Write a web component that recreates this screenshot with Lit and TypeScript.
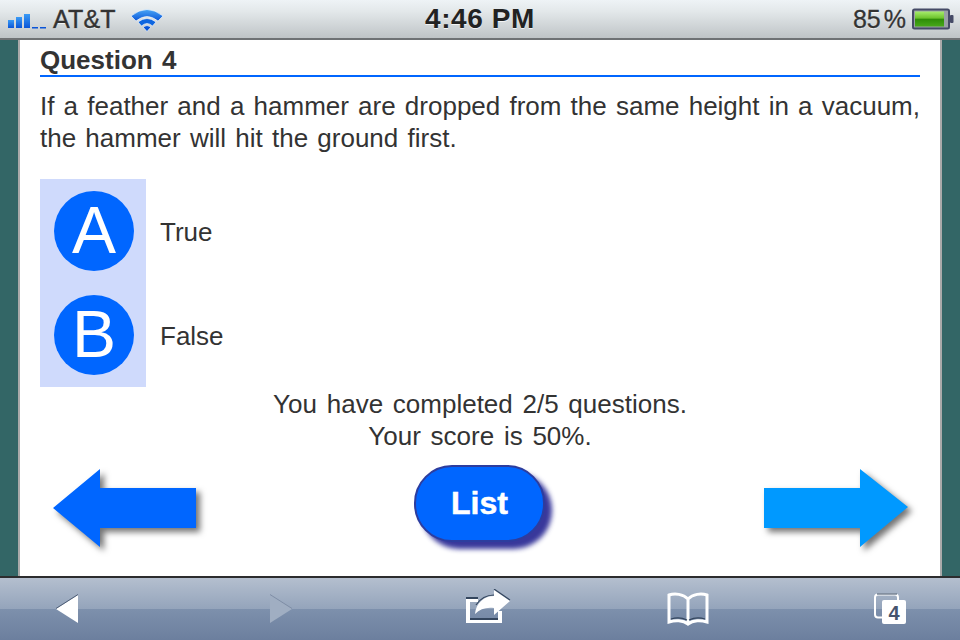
import { LitElement, html, css } from "lit";
import { customElement } from "lit/decorators.js";

@customElement("app-root")
export class AppRoot extends LitElement {
  static styles = css`
    :host { display: block; width: 960px; height: 640px; overflow: hidden; font-family: "Liberation Sans", Arial, sans-serif; color: #333; }
    .screen { display: flex; flex-direction: column; width: 960px; height: 640px; }
    .status { position: relative; flex: none; height: 40px; box-sizing: border-box; border-bottom: 2px solid #6f7275; background: linear-gradient(#eef3f6, #e3e8ea 30%, #bfc4c7); display: flex; align-items: center; justify-content: space-between; padding: 0 6px; color: #333; text-shadow: 0 1px 0 rgba(255,255,255,.75); }
    .left, .right { display: flex; align-items: center; }
    .carrier { font-size: 25px; margin-left: 6px; line-height: 38px; letter-spacing: .2px; -webkit-text-stroke: .4px #333; }
    .wifi { margin-left: 14px; display: block; }
    .bars { display: block; margin-left: 1px; }
    .time { position: absolute; left: 0; right: 0; top: 0; text-align: center; font-size: 28px; font-weight: bold; line-height: 38px; color: #222; letter-spacing: .6px; }
    .pct { font-size: 25px; margin-right: 6px; line-height: 38px; -webkit-text-stroke: .3px #333; }
    .pct span { margin-left: 3px; }
    .main { flex: 1; background: #336666; padding: 0 18px; display: flex; min-height: 0; }
    .page { flex: 1; background: #fff; border-left: 2px solid #aaa; border-right: 2px solid #aaa; padding: 0 20px; display: flex; flex-direction: column; }
    h2 { margin: 0; padding-top: 5px; box-sizing: border-box; font-size: 26px; line-height: 31px; font-weight: bold; word-spacing: 2px; border-bottom: 2px solid #0066ff; height: 37px; color: #333; }
    .q { margin: 13px 0 0; font-size: 26px; line-height: 32px; }
    .q span { display: block; }
    .l1 { text-align: justify; text-align-last: justify; white-space: nowrap; }
    .l2 { word-spacing: 2px; }
    .choices { display: grid; grid-template-columns: 106px auto; margin-top: 25px; justify-content: start; }
    .cell { background: #cfdafc; height: 104px; display: flex; align-items: center; justify-content: center; padding-left: 2px; box-sizing: border-box; }
    .circle { width: 80px; height: 80px; border-radius: 50%; background: #0066ff; color: #fff; font-size: 66px; line-height: 78px; text-align: center; }
    .label { font-size: 26px; display: flex; align-items: center; padding: 2px 0 0 14px; }
    .done { text-align: center; font-size: 26px; line-height: 32px; margin-top: 1px; word-spacing: 2.5px; }
    .nav { display: flex; align-items: flex-start; justify-content: space-between; margin-top: 13px; padding: 0 12px 0 13px; }
    .arrow { display: block; margin-top: 4px; filter: drop-shadow(4px 4px 3px rgba(0,0,0,.55)); }
    .list { width: 131px; height: 77px; margin-right: 2px; box-sizing: border-box; border: 2px solid #2d3d9e; border-radius: 38px; background: #0066ff; color: #fff; font-size: 32px; font-weight: bold; -webkit-text-stroke: .5px #fff; display: flex; align-items: center; justify-content: center; box-shadow: 7px 7px 5px rgba(45,45,150,.95); }
    .tools { flex: none; height: 64px; box-sizing: border-box; border-top: 2px solid #2c2c2e; background: linear-gradient(#b3bece 1px, #94a4bb 50%, #7d90ac 50%, #6c7f9e); display: grid; grid-template-columns: 134px 294px 120px 280px 124px; align-items: center; }
    .tool { display: flex; justify-content: center; }
    .tool svg { display: block; }
    .count { font: bold 20px "Liberation Sans", sans-serif; fill: #46546d; text-anchor: middle; }
  `;

  render() {
    return html`<div class="screen">
      <div class="status">
        <div class="left">
          <svg class="bars" width="40" height="20" viewBox="0 0 40 20">
            <defs><linearGradient id="b" x1="0" y1="0" x2="0" y2="1"><stop offset="0" stop-color="#3a9bf5"/><stop offset="1" stop-color="#0a55d8"/></linearGradient></defs>
            <rect x="1" y="11" width="6" height="8" fill="url(#b)"/>
            <rect x="9" y="8" width="6" height="11" fill="url(#b)"/>
            <rect x="17" y="5" width="6" height="14" fill="url(#b)"/>
            <rect x="25" y="18" width="6" height="1.500" fill="#0a55d8"/>
            <rect x="33" y="18" width="6" height="1.500" fill="#0a55d8"/>
          </svg>
          <span class="carrier">AT&amp;T</span>
          <svg class="wifi" width="34" height="26" viewBox="0 0 34 26">
            <defs><linearGradient id="w" x1="0" y1="0" x2="0" y2="1"><stop offset="0" stop-color="#49a5f5"/><stop offset="1" stop-color="#0a55d8"/></linearGradient></defs>
            <path d="M1 10 Q17 -3 33 10 L28 15 Q17 6 6 15 Z" fill="url(#w)" stroke="#fff" stroke-width=".6"/>
            <path d="M8 16 Q17 9 26 16 L22.500 20 Q17 15 11.500 20 Z" fill="#0f66e0" stroke="#fff" stroke-width=".6"/>
            <path d="M13 21 Q17 18 21 21 L17 25.500 Z" fill="#0a55d8" stroke="#fff" stroke-width=".6"/>
          </svg>
        </div>
        <div class="time">4:46 PM</div>
        <div class="right">
          <span class="pct">85<span>%</span></span>
          <svg width="42" height="22" viewBox="0 0 42 22">
            <defs><linearGradient id="g" x1="0" y1="0" x2="0" y2="1"><stop offset="0" stop-color="#a6ec6c"/><stop offset=".45" stop-color="#6cc22c"/><stop offset=".5" stop-color="#2e8c08"/><stop offset="1" stop-color="#47a81a"/></linearGradient></defs>
            <rect x="1" y="1.500" width="36" height="19" rx="1.500" fill="#9aa0a6" stroke="#454a66" stroke-width="2"/>
            <rect x="3" y="3.500" width="29" height="15" fill="url(#g)"/>
            <rect x="38" y="7" width="3.500" height="8" rx="1" fill="#454a66"/>
          </svg>
        </div>
      </div>
      <div class="main">
        <div class="page">
          <h2>Question 4</h2>
          <p class="q"><span class="l1">If a feather and a hammer are dropped from the same height in a vacuum,</span><span class="l2">the hammer will hit the ground first.</span></p>
          <div class="choices">
            <div class="cell"><div class="circle">A</div></div>
            <div class="label">True</div>
            <div class="cell"><div class="circle">B</div></div>
            <div class="label">False</div>
          </div>
          <div class="done">You have completed 2/5 questions.<br />Your score is 50%.</div>
          <div class="nav">
            <svg class="arrow" width="144" height="80" viewBox="0 0 144 80"><path d="M0 39 L47 0 L47 19 L143 19 L143 59 L47 59 L47 78 Z" fill="#0066ff"/></svg>
            <div class="list">List</div>
            <svg class="arrow" width="144" height="80" viewBox="0 0 144 80"><path d="M0 19 L96 19 L96 0 L144 38 L96 78 L96 59 L0 59 Z" fill="#0099ff"/></svg>
          </div>
        </div>
      </div>
      <div class="tools">
        <div class="tool"><svg width="24" height="30" viewBox="0 0 24 30"><path d="M1 15 L23 1 L23 29 Z" fill="#fff"/><path d="M1 14.500 L23 .5" stroke="#4d5c75" stroke-width="1" fill="none"/></svg></div>
        <div class="tool"><svg width="24" height="30" viewBox="0 0 24 30"><path d="M1 1 L23 15 L1 29 Z" fill="#a0aec2"/><path d="M1 .5 L23 14.500" stroke="#7f8ea6" stroke-width="1" fill="none"/></svg></div>
        <div class="tool"><svg width="46" height="40" viewBox="0 0 46 40">
          <path d="M1 9 H13 V13 H5 V30 H33 V22 H37 V34 H1 Z" fill="#fff"/>
          <path d="M1 8 H13 V10 H1 Z M5 29 H33 V31 H5 Z" fill="#34465e"/>
          <path d="M29 1 L45 12 L29 26 L29 19 C21 18 15 20 10 25 C11 14 19 7 29 7 Z" fill="#fff"/>
          <path d="M29 0 L45 11 M11 16 C15 10 21 6 29 6" stroke="#34465e" stroke-width="1.200" fill="none"/>
        </svg></div>
        <div class="tool"><svg width="42" height="34" viewBox="0 0 42 34" fill="none">
          <path d="M21 7 C16 2 8 1 2 3 V30 C8 28 16 28 21 32 C26 28 34 28 40 30 V3 C34 1 26 2 21 7 Z M21 7 V30" stroke="#fff" stroke-width="3"/>
          <path d="M4 27 C10 25 16 26 20 28 M38 27 C32 25 26 26 22 28" stroke="#34465e" stroke-width="1.200"/>
        </svg></div>
        <div class="tool"><svg width="34" height="32" viewBox="0 0 34 32">
          <rect x="2" y="1.500" width="23" height="23" rx="3" fill="none" stroke="#fff" stroke-width="2"/>
          <path d="M4 1 H24" stroke="#34465e" stroke-width="1"/>
          <rect x="9" y="7" width="24" height="24" rx="2" fill="#fff"/>
          <text class="count" x="21" y="27">4</text>
        </svg></div>
      </div>
    </div>`;
  }
}
